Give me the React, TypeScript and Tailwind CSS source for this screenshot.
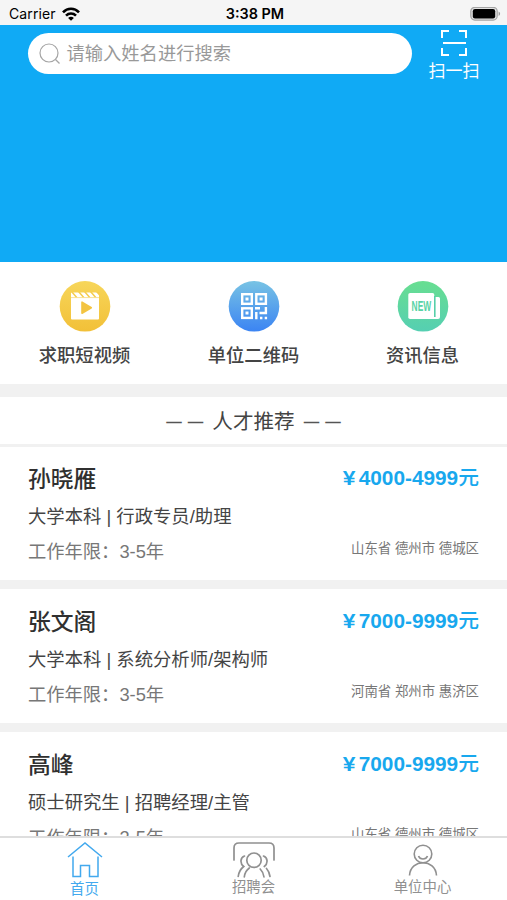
import React from "react";

const cjk = "font-['Liberation_Sans','Noto_Sans_CJK_SC',sans-serif]";

type Candidate = {
  name: string;
  education: string;
  position: string;
  salary: string;
  city: string;
};

const candidates: Candidate[] = [
  { name: "孙晓雁", education: "大学本科", position: "行政专员/助理", salary: "4000-4999", city: "山东省 德州市 德城区" },
  { name: "张文阁", education: "大学本科", position: "系统分析师/架构师", salary: "7000-9999", city: "河南省 郑州市 惠济区" },
  { name: "高峰", education: "硕士研究生", position: "招聘经理/主管", salary: "7000-9999", city: "山东省 德州市 德城区" },
];

function StatusBar() {
  return (
    <div className="grid h-[25px] shrink-0 grid-cols-3 items-center bg-[#f5f5f5] pt-[2px] pr-[6px] pl-[9px] font-['Inter',sans-serif] text-black">
      <div className="flex items-center gap-[6px] text-[14px] leading-none tracking-[0.1px]">
        Carrier
        <svg width="18" height="14" viewBox="0 0 18 14" fill="none" stroke="#000" strokeWidth="2.6">
          <path d="M1 5.300C5.500.6 12.500.6 17 5.300" />
          <path d="M4 8.600c2.800-2.800 7.200-2.800 10 0" />
          <path d="M9 13.700 6.100 10.900c1.700-1.500 4.100-1.500 5.800 0Z" fill="#000" stroke="none" />
        </svg>
      </div>
      <div className="pt-px text-center text-[14.400px] leading-none font-semibold whitespace-nowrap">3:38 PM</div>
      <div className="flex justify-end">
        <svg width="31" height="14" viewBox="0 0 31 14">
          <rect x=".8" y=".3" width="26.400" height="12.800" rx="4" fill="#e2e2e2" stroke="#a4a4a4" strokeWidth="1.200" />
          <rect x="2.800" y="2" width="22.400" height="9.400" rx="2.200" fill="#000" />
          <path d="M28.600 4.500c2 .8 2 3.600 0 4.400Z" fill="#999" />
        </svg>
      </div>
    </div>
  );
}

function Banner() {
  return (
    <div className="flex h-[237px] shrink-0 items-start bg-[#10aaf5] pl-7">
      <div className="mt-[8px] flex h-[41px] w-[384px] items-center rounded-full bg-white pl-[11px]">
        <svg width="22" height="22" viewBox="0 0 22 22" fill="none" stroke="#a5a5a5" strokeWidth="1.200">
          <circle cx="10" cy="10" r="9" />
          <path d="m16.500 16.500 4 4" />
        </svg>
        <span className="ml-[5.500px] text-[18.300px] leading-[26px] text-[#999]">请输入姓名进行搜索</span>
      </div>
      <div className="mt-[4px] ml-[16px] flex w-[52px] flex-col items-center text-white">
        <svg width="28" height="28" viewBox="0 0 28 28" fill="none" stroke="#fff" strokeWidth="2">
          <path d="M2 9V2h7M19 2h7v7M26 19v7h-7M9 26H2v-7M3 14h23" />
        </svg>
        <span className="mt-[4px] text-[17px] leading-[22px] whitespace-nowrap">扫一扫</span>
      </div>
    </div>
  );
}

function VideoIcon() {
  return (
    <svg width="52" height="52" viewBox="0 0 52 52">
      <defs>
        <linearGradient id="video" x1="0" y1="0" x2="0" y2="1">
          <stop stopColor="#f7d65a" />
          <stop offset="1" stopColor="#f2c038" />
        </linearGradient>
      </defs>
      <circle cx="26" cy="26.300" r="25.300" fill="url(#video)" />
      <path d="M12 12.500h28v26a1 1 0 0 1-1 1H13a1 1 0 0 1-1-1Z" fill="#fff" />
      <path d="m12 12 4.500 5.200h2L14 12ZM19 12l4.500 5.200h2L21 12ZM25 12l4.500 5.200h2L27 12ZM31 12l4.500 5.200h2L33 12ZM37 12l3.500 4V12Z" fill="#f5cd4e" />
      <path d="M12 17.600h28" stroke="#f5cd4e" strokeWidth=".6" />
      <path d="M23 22.200v11l9.300-5.500Z" fill="#f3c442" stroke="#f3c442" strokeWidth="1.600" strokeLinejoin="round" />
    </svg>
  );
}

function QrIcon() {
  return (
    <svg width="52" height="52" viewBox="0 0 52 52">
      <defs>
        <linearGradient id="qr" x1="0" y1="0" x2="0" y2="1">
          <stop stopColor="#78c3e4" />
          <stop offset="1" stopColor="#3b84f3" />
        </linearGradient>
      </defs>
      <circle cx="26" cy="26.300" r="25.300" fill="url(#qr)" />
      <g fill="none" stroke="#fff" strokeWidth="2.400">
        <rect x="14.200" y="14.200" width="9.600" height="9.600" />
        <rect x="28.300" y="14.200" width="9.600" height="9.600" />
        <rect x="14.200" y="28.300" width="9.600" height="9.600" />
        <path d="M27 28.300h5M31.500 33h7.600M37.900 27v6M28.300 32V39.200" />
      </g>
      <path d="M17.500 17.500h3v3h-3ZM31.600 17.500h3v3h-3ZM17.500 31.600h3v3h-3ZM32 36.800h2.400v2.400H32ZM36.700 36.800h2.400v2.400h-2.400Z" fill="#fff" />
    </svg>
  );
}

function NewsIcon() {
  return (
    <svg width="52" height="52" viewBox="0 0 52 52">
      <defs>
        <linearGradient id="news" x1="0" y1="0" x2="0" y2="1">
          <stop stopColor="#68de91" />
          <stop offset="1" stopColor="#55cfb2" />
        </linearGradient>
      </defs>
      <circle cx="26" cy="26.300" r="25.300" fill="url(#news)" />
      <rect x="11.300" y="13" width="26" height="26" rx="1.800" fill="#fff" />
      <path d="M35 39V36.500h2.600V17h3.900a1.500 1.500 0 0 1 1.500 1.500V37a2 2 0 0 1-2 2Z" fill="#fff" />
      <path d="M37.800 16v21" stroke="#57cfa9" strokeWidth="1.600" />
      <text x="14.600" y="31.200" textLength="19.500" lengthAdjust="spacingAndGlyphs" fontFamily="Liberation Sans" fontWeight="700" fontSize="14" fill="#59d3a5">
        NEW
      </text>
    </svg>
  );
}

const shortcuts = [
  { label: "求职短视频", icon: <VideoIcon /> },
  { label: "单位二维码", icon: <QrIcon /> },
  { label: "资讯信息", icon: <NewsIcon /> },
];

function Shortcuts() {
  return (
    <div className="grid h-[122px] shrink-0 grid-cols-3 bg-white pt-[18px]">
      {shortcuts.map((s) => (
        <div key={s.label} className="flex flex-col items-center">
          {s.icon}
          <span className="mt-[11px] text-[18.300px] leading-[26px] font-medium text-[#444]">{s.label}</span>
        </div>
      ))}
    </div>
  );
}

function Dashes() {
  return (
    <span className="flex gap-[6px] text-[15.500px] leading-[26px] font-bold text-[#555]">
      <span>—</span>
      <span>—</span>
    </span>
  );
}

function CandidateCard({ c }: { c: Candidate }) {
  return (
    <div className="mb-[9px] h-[134px] shrink-0 bg-white px-7 pt-[17px] first:h-[133px] first:pt-[16px]">
      <div className="flex h-[32px] items-center justify-between">
        <span className="text-[22.800px] leading-[32px] font-medium text-[#303030]">{c.name}</span>
        <span className="-mt-[2px] flex items-center text-[20.800px] leading-[32px] font-bold text-[#18a8ee]">
          <span className="mr-[3px] inline-block origin-right scale-x-110">¥</span>
          <span>
            {c.salary}
            <span className="font-medium">元</span>
          </span>
        </span>
      </div>
      <div className="mt-[9px] text-[18.350px] leading-[26px] text-[#444]">
        {c.education} | {c.position}
      </div>
      <div className="mt-[9px] flex items-start justify-between">
        <span className="text-[18.300px] leading-[26px] text-[#777]">工作年限：3-5年</span>
        <span className="text-[13.400px] leading-[20px] text-[#777]">{c.city}</span>
      </div>
    </div>
  );
}

function TabBar() {
  return (
    <nav className="grid h-[64px] shrink-0 grid-cols-3 border-t-2 border-[#dedede] bg-white pt-[3px] text-[14.400px] leading-[20px] text-[#909090]">
      <div className="flex flex-col items-center text-[#42a9ee]">
        <svg width="36" height="38" viewBox="0 0 36 38" fill="none" stroke="currentColor" strokeWidth="1.500">
          <path d="M1 16 18 2l17 14M6 15.500V35.500h7.500V24.500h9V35.500H31V15.500" />
        </svg>
        <span>首页</span>
      </div>
      <div className="flex flex-col items-center">
        <svg width="44" height="37" viewBox="0 0 44 37" fill="none" stroke="currentColor" strokeWidth="1.700" strokeLinecap="round">
          <path d="M2 19V7q0-5 5-5h30q5 0 5 5v12" />
          <circle cx="22" cy="19.200" r="7.200" />
          <path d="M12.300 36c.4-3.800 2-6.800 5-9M32 36c-.4-3.200-1.600-5.800-3.800-8M12.500 15c-4.300 1.500-4.800 7.500-.8 10.500-3.200 2.500-5 5.700-5.500 10M31.500 15c4.300 1.500 4.800 7.500.8 10.500M34.500 27.500c2 2.200 3 4.700 3.500 8" />
        </svg>
        <span className="-mt-px">招聘会</span>
      </div>
      <div className="flex flex-col items-center">
        <svg width="30" height="36" viewBox="0 0 30 36" fill="none" stroke="currentColor" strokeWidth="1.600">
          <circle cx="15" cy="13" r="8.800" />
          <path d="M10.500 15c1.500 4 7.500 4 9 0M1.500 34.500c1-17 26-17 27 0" />
        </svg>
        <span>单位中心</span>
      </div>
    </nav>
  );
}

export default function App() {
  return (
    <div className={`flex h-[900px] w-[507px] flex-col overflow-hidden bg-[#f1f1f1] ${cjk}`}>
      <StatusBar />
      <Banner />
      <Shortcuts />
      <div className="mt-[13px] mb-[3px] flex h-[47px] shrink-0 items-center justify-center gap-[9px] bg-white pt-[3px] text-[20.600px] text-[#444]">
        <Dashes />
        <span className="leading-[30px]">人才推荐</span>
        <Dashes />
      </div>
      <main className="flex min-h-0 flex-1 flex-col overflow-hidden">
        {candidates.map((c) => (
          <CandidateCard key={c.name} c={c} />
        ))}
      </main>
      <TabBar />
    </div>
  );
}
